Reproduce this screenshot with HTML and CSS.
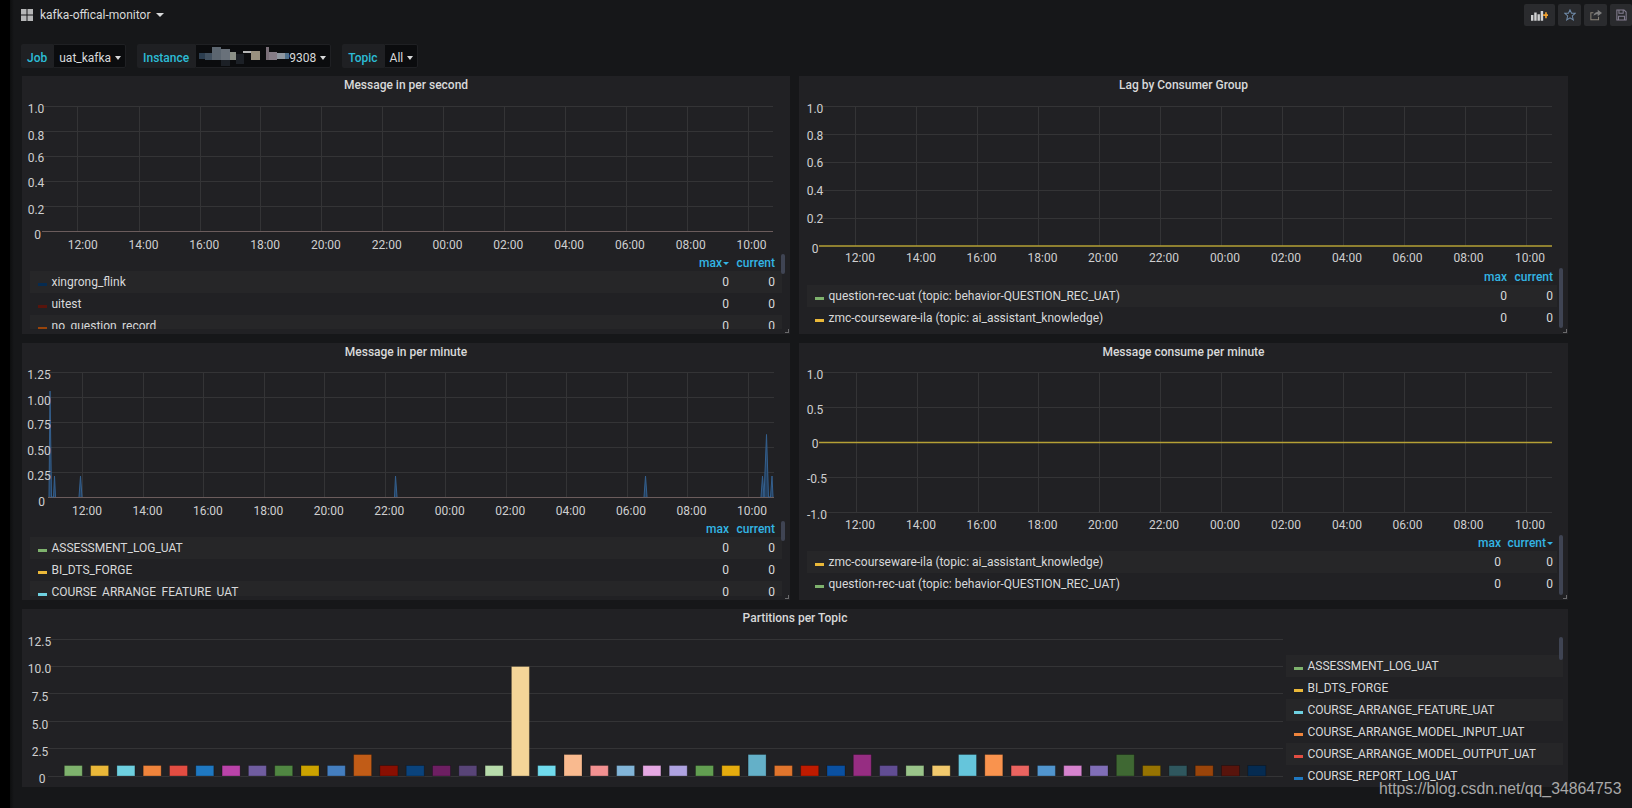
FILE: index.html
```html
<!DOCTYPE html>
<html lang="en">
<head>
<meta charset="utf-8">
<title>kafka-offical-monitor</title>
<link rel="stylesheet" href="styles.css">
</head>
<body>
<div class="rail"></div>
<main class="main">
  <header class="topbar">
    <div class="crumb">
      <svg class="logo" width="12" height="12" viewBox="0 0 12 12"><path d="M0 0h5.500v5.500H0zM6.500 0H12v5.500H6.500zM0 6.500h5.500V12H0zM6.500 6.500H12V12H6.500z"/></svg>
      <span class="crumb-title">kafka-offical-monitor</span>
      <span class="caret caret-title"></span>
    </div>
    <div class="actions">
      <button class="btn btn-wide" aria-label="Add panel">
        <svg width="17" height="12" viewBox="0 0 21 14"><path fill="#d0d1d2" d="M0 7h3v7H0zM4 4h3v10H4zM8 6h3v8H8zM12 2h3v12h-3z"/><path fill="#f2a12e" d="M15 6h2.500V3.500h2V6H21v2.200h-1.500V11h-2V8.200H15z"/></svg>
      </button>
      <button class="btn" aria-label="Star">
        <svg width="12" height="12" viewBox="0 0 14 14"><path class="ico" stroke="#6f8aa8" d="M7 1l1.800 4h4.200L9.700 8l1.100 4.700L7 10.300 3.200 12.700 4.300 8 1 5h4.200z"/></svg>
      </button>
      <button class="btn" aria-label="Share">
        <svg width="12" height="12" viewBox="0 0 14 14"><path class="ico" stroke="#8a8478" d="M10 9v3.500H1v-8h3"/><path fill="#7d7d7d" d="M4 8c.500-3 2.500-4.500 5-4.500V1l5 3.800L9 8.500V6C7 6 5.200 6.500 4 8z"/></svg>
      </button>
      <button class="btn btn-last" aria-label="Save">
        <svg width="11" height="12" viewBox="0 0 13 14"><path class="ico" stroke="#857f92" d="M1 1h8.500L12 3.500V13H1zM3.500 1v4h5V1M3 13V8.500h7V13"/></svg>
      </button>
    </div>
  </header>

  <section class="vars">
    <div class="var">
      <span class="var-label">Job</span>
      <span class="var-value">uat_kafka<span class="caret"></span></span>
    </div>
    <div class="var">
      <span class="var-label">Instance</span>
      <span class="var-value var-value-masked">
        <svg class="mosaic" width="93" height="22" viewBox="0 1 93 22">
          <path fill="#2c3e50" d="M3 9h6v6H3z"/><path fill="#41505f" d="M9 9h7v7H9z"/><path fill="#5c6670" d="M16 3h9v13h-9z"/><path fill="#69717a" d="M25 5h9v11h-9z"/><path fill="#8b8f86" d="M34 8h6v8h-6z"/><path fill="#1c2026" d="M25 16h9v6h-9zM40 10h8v10h-8z"/><path fill="#b5b5b5" d="M47 7h8v2h-8z"/><path fill="#9a917f" d="M55 7h9v9h-9z"/><path fill="#7a6f78" d="M70 3h3v13h-3z"/><path fill="#857c86" d="M73 8h8v8h-8z"/><path fill="#8f97a0" d="M81 9h8v6h-8z"/><path fill="#50708a" d="M89 9h4v6h-4z"/>
        </svg>9308<span class="caret"></span>
      </span>
    </div>
    <div class="var">
      <span class="var-label">Topic</span>
      <span class="var-value">All<span class="caret"></span></span>
    </div>
  </section>

  <section class="board">
    <article class="panel">
      <h2 class="panel-title">Message in per second</h2>
      <svg class="chart chart-a" viewBox="22 93 768 161">
        <path class="grid" d="M43 106.500H773M43 131.500H773M43 156.500H773M43 181.500H773M43 206.500H773M77.500 106V231M139.500 106V231M200.500 106V231M260.500 106V231M321.500 106V231M382.500 106V231M443.500 106V231M504.500 106V231M565.500 106V231M626.500 106V231M687.500 106V231M748.500 106V231"/>
        <path class="series series-flat" d="M42 231.500H773"/>
        <g class="axis">
          <text x="36" y="113">1.0</text><text x="36" y="140">0.8</text><text x="36" y="162">0.6</text><text x="36" y="187">0.4</text><text x="36" y="214">0.2</text><text x="37.500" y="239">0</text>
          <text x="82.700" y="249">12:00</text><text x="143.500" y="249">14:00</text><text x="204.300" y="249">16:00</text><text x="265.100" y="249">18:00</text><text x="325.900" y="249">20:00</text><text x="386.700" y="249">22:00</text><text x="447.500" y="249">00:00</text><text x="508.300" y="249">02:00</text><text x="569.100" y="249">04:00</text><text x="629.900" y="249">06:00</text><text x="690.700" y="249">08:00</text><text x="751.500" y="249">10:00</text>
        </g>
      </svg>
      <div class="legend legend-a">
        <div class="legend-head"><span class="cell">max<span class="caret caret-blue"></span></span><span class="cell">current</span></div>
        <div class="row"><span class="swatch c-navy"></span><span class="name">xingrong_flink</span><span class="cell">0</span><span class="cell">0</span></div>
        <div class="row"><span class="swatch c-maroon"></span><span class="name">uitest</span><span class="cell">0</span><span class="cell">0</span></div>
        <div class="row"><span class="swatch c-brown"></span><span class="name">no_question_record</span><span class="cell">0</span><span class="cell">0</span></div>
      </div>
      <span class="scroll scroll-a"></span>
      <span class="handle"></span>
    </article>

    <article class="panel">
      <h2 class="panel-title">Lag by Consumer Group</h2>
      <svg class="chart chart-b" viewBox="799 93 769 175">
        <path class="grid" d="M819 106.500H1552M819 134.500H1552M819 162.500H1552M819 190.500H1552M819 218.500H1552M855.500 106V246M916.500 106V246M977.500 106V246M1038.500 106V246M1099.500 106V246M1160.500 106V246M1221.500 106V246M1282.500 106V246M1343.500 106V246M1404.500 106V246M1465.500 106V246M1526.500 106V246"/>
        <path class="series series-yellow" d="M819 246H1552"/>
        <g class="axis">
          <text x="815" y="113">1.0</text><text x="815" y="140">0.8</text><text x="815" y="167">0.6</text><text x="815" y="195">0.4</text><text x="815" y="223">0.2</text><text x="815" y="253">0</text>
          <text x="860" y="262">12:00</text><text x="921" y="262">14:00</text><text x="981.500" y="262">16:00</text><text x="1042.500" y="262">18:00</text><text x="1103" y="262">20:00</text><text x="1164" y="262">22:00</text><text x="1225" y="262">00:00</text><text x="1286" y="262">02:00</text><text x="1347" y="262">04:00</text><text x="1407.500" y="262">06:00</text><text x="1468.500" y="262">08:00</text><text x="1530" y="262">10:00</text>
        </g>
      </svg>
      <div class="legend legend-b">
        <div class="legend-head"><span class="cell">max</span><span class="cell">current</span></div>
        <div class="row"><span class="swatch c-green"></span><span class="name">question-rec-uat (topic: behavior-QUESTION_REC_UAT)</span><span class="cell">0</span><span class="cell">0</span></div>
        <div class="row"><span class="swatch c-yellow"></span><span class="name">zmc-courseware-ila (topic: ai_assistant_knowledge)</span><span class="cell">0</span><span class="cell">0</span></div>
      </div>
      <span class="scroll scroll-b"></span>
      <span class="handle"></span>
    </article>

    <article class="panel">
      <h2 class="panel-title">Message in per minute</h2>
      <svg class="chart chart-c" viewBox="22 360 768 160">
        <path class="grid" d="M48 372.500H774M48 397.500H774M48 422.500H774M48 447.500H774M48 472.500H774M82.500 372V497M143.500 372V497M203.500 372V497M264.500 372V497M324.500 372V497M385.500 372V497M445.500 372V497M506.500 372V497M566.500 372V497M627.500 372V497M687.500 372V497M748.500 372V497"/>
        <path class="series series-flat" d="M48 497.500H774"/>
        <path class="spikes" d="M49 497L50 391L51.500 497L53.500 497L54.500 476L55.500 497M79 497L80.500 476L82 497M394.500 497L395.500 476L397 497M644 497L645.500 476L647 497M761 497L762.500 476L764 497L766.500 434.500L768.500 497L770.500 497L772 476L773 497"/>
        <g class="axis">
          <text x="39" y="378.500">1.25</text><text x="39" y="405">1.00</text><text x="39" y="429">0.75</text><text x="39" y="455">0.50</text><text x="39" y="480">0.25</text><text x="41.700" y="506">0</text>
          <text x="87" y="515">12:00</text><text x="147.500" y="515">14:00</text><text x="207.900" y="515">16:00</text><text x="268.400" y="515">18:00</text><text x="328.800" y="515">20:00</text><text x="389.300" y="515">22:00</text><text x="449.700" y="515">00:00</text><text x="510.200" y="515">02:00</text><text x="570.600" y="515">04:00</text><text x="631" y="515">06:00</text><text x="691.500" y="515">08:00</text><text x="752" y="515">10:00</text>
        </g>
      </svg>
      <div class="legend legend-c">
        <div class="legend-head"><span class="cell">max</span><span class="cell">current</span></div>
        <div class="row"><span class="swatch c-green"></span><span class="name">ASSESSMENT_LOG_UAT</span><span class="cell">0</span><span class="cell">0</span></div>
        <div class="row"><span class="swatch c-yellow"></span><span class="name">BI_DTS_FORGE</span><span class="cell">0</span><span class="cell">0</span></div>
        <div class="row"><span class="swatch c-cyan"></span><span class="name">COURSE_ARRANGE_FEATURE_UAT</span><span class="cell">0</span><span class="cell">0</span></div>
      </div>
      <span class="scroll scroll-c"></span>
      <span class="handle"></span>
    </article>

    <article class="panel">
      <h2 class="panel-title">Message consume per minute</h2>
      <svg class="chart chart-d" viewBox="799 360 769 174">
        <path class="grid" d="M819 372.500H1552M819 407.500H1552M819 477.500H1552M819 512.500H1552M856.500 372V512M917.500 372V512M978.500 372V512M1038.500 372V512M1099.500 372V512M1160.500 372V512M1221.500 372V512M1282.500 372V512M1343.500 372V512M1404.500 372V512M1465.500 372V512M1526.500 372V512"/>
        <path class="series series-yellow" d="M819 442.500H1552"/>
        <g class="axis">
          <text x="815" y="378.500">1.0</text><text x="815" y="414">0.5</text><text x="815" y="448">0</text><text x="817" y="483">-0.5</text><text x="817" y="519">-1.0</text>
          <text x="860" y="528.500">12:00</text><text x="921" y="528.500">14:00</text><text x="981.500" y="528.500">16:00</text><text x="1042.500" y="528.500">18:00</text><text x="1103" y="528.500">20:00</text><text x="1164" y="528.500">22:00</text><text x="1225" y="528.500">00:00</text><text x="1286" y="528.500">02:00</text><text x="1347" y="528.500">04:00</text><text x="1407.500" y="528.500">06:00</text><text x="1468.500" y="528.500">08:00</text><text x="1530" y="528.500">10:00</text>
        </g>
      </svg>
      <div class="legend legend-d">
        <div class="legend-head"><span class="cell">max</span><span class="cell">current<span class="caret caret-blue"></span></span></div>
        <div class="row"><span class="swatch c-yellow"></span><span class="name">zmc-courseware-ila (topic: ai_assistant_knowledge)</span><span class="cell">0</span><span class="cell">0</span></div>
        <div class="row"><span class="swatch c-green"></span><span class="name">question-rec-uat (topic: behavior-QUESTION_REC_UAT)</span><span class="cell">0</span><span class="cell">0</span></div>
      </div>
      <span class="scroll scroll-d"></span>
      <span class="handle"></span>
    </article>

    <article class="panel panel-wide">
      <h2 class="panel-title">Partitions per Topic</h2>
      <div class="wide-body">
        <svg class="chart chart-e" viewBox="22 626 1264 161">
          <path class="grid" d="M48 639.500H1283M48 666.500H1283M48 693.500H1283M48 721.500H1283M48 748.500H1283M48 776.500H1283"/>
          <g class="bars">
            <rect x="64.300" y="765.500" width="18" height="10.500" fill="#7EB26D"/><rect x="90.600" y="765.500" width="18" height="10.500" fill="#EAB839"/><rect x="116.900" y="765.500" width="18" height="10.500" fill="#6ED0E0"/><rect x="143.200" y="765.500" width="18" height="10.500" fill="#EF843C"/><rect x="169.500" y="765.500" width="18" height="10.500" fill="#E24D42"/><rect x="195.800" y="765.500" width="18" height="10.500" fill="#1F78C1"/><rect x="222.100" y="765.500" width="18" height="10.500" fill="#BA43A9"/><rect x="248.400" y="765.500" width="18" height="10.500" fill="#705DA0"/><rect x="274.700" y="765.500" width="18" height="10.500" fill="#508642"/><rect x="301" y="765.500" width="18" height="10.500" fill="#CCA300"/><rect x="327.300" y="765.500" width="18" height="10.500" fill="#447EBF"/><rect x="353.600" y="754.500" width="18" height="21.500" fill="#C15C17"/><rect x="379.900" y="765.500" width="18" height="10.500" fill="#890F02"/><rect x="406.200" y="765.500" width="18" height="10.500" fill="#0A437C"/><rect x="432.500" y="765.500" width="18" height="10.500" fill="#6D1F62"/><rect x="458.800" y="765.500" width="18" height="10.500" fill="#584477"/><rect x="485.100" y="765.500" width="18" height="10.500" fill="#B7DBAB"/><rect x="511.400" y="666.500" width="18" height="109.500" fill="#F4D598"/><rect x="537.700" y="765.500" width="18" height="10.500" fill="#70DBED"/><rect x="564" y="754.500" width="18" height="21.500" fill="#F9BA8F"/><rect x="590.300" y="765.500" width="18" height="10.500" fill="#F29191"/><rect x="616.600" y="765.500" width="18" height="10.500" fill="#82B5D8"/><rect x="642.900" y="765.500" width="18" height="10.500" fill="#E5A8E2"/><rect x="669.200" y="765.500" width="18" height="10.500" fill="#AEA2E0"/><rect x="695.500" y="765.500" width="18" height="10.500" fill="#629E51"/><rect x="721.800" y="765.500" width="18" height="10.500" fill="#E5AC0E"/><rect x="748.100" y="754.500" width="18" height="21.500" fill="#64B0C8"/><rect x="774.400" y="765.500" width="18" height="10.500" fill="#E0752D"/><rect x="800.700" y="765.500" width="18" height="10.500" fill="#BF1B00"/><rect x="827" y="765.500" width="18" height="10.500" fill="#0A50A1"/><rect x="853.300" y="754.500" width="18" height="21.500" fill="#962D82"/><rect x="879.600" y="765.500" width="18" height="10.500" fill="#614D93"/><rect x="905.900" y="765.500" width="18" height="10.500" fill="#9AC48A"/><rect x="932.200" y="765.500" width="18" height="10.500" fill="#F2C96D"/><rect x="958.500" y="754.500" width="18" height="21.500" fill="#65C5DB"/><rect x="984.800" y="754.500" width="18" height="21.500" fill="#F9934E"/><rect x="1011.100" y="765.500" width="18" height="10.500" fill="#EA6460"/><rect x="1037.400" y="765.500" width="18" height="10.500" fill="#5195CE"/><rect x="1063.700" y="765.500" width="18" height="10.500" fill="#D683CE"/><rect x="1090" y="765.500" width="18" height="10.500" fill="#806EB7"/><rect x="1116.300" y="754.500" width="18" height="21.500" fill="#3F6833"/><rect x="1142.600" y="765.500" width="18" height="10.500" fill="#967302"/><rect x="1168.900" y="765.500" width="18" height="10.500" fill="#2F575E"/><rect x="1195.200" y="765.500" width="18" height="10.500" fill="#99440A"/><rect x="1221.500" y="765.500" width="18" height="10.500" fill="#58140C"/><rect x="1247.800" y="765.500" width="18" height="10.500" fill="#052B51"/>
          </g>
          <g class="axis">
            <text x="39.500" y="646">12.5</text><text x="39.500" y="673">10.0</text><text x="40" y="701">7.5</text><text x="40" y="729">5.0</text><text x="40" y="756">2.5</text><text x="42" y="783">0</text>
          </g>
        </svg>
        <div class="legend legend-e">
          <div class="row"><span class="swatch c-green"></span><span class="name">ASSESSMENT_LOG_UAT</span></div>
          <div class="row"><span class="swatch c-yellow"></span><span class="name">BI_DTS_FORGE</span></div>
          <div class="row"><span class="swatch c-cyan"></span><span class="name">COURSE_ARRANGE_FEATURE_UAT</span></div>
          <div class="row"><span class="swatch c-orange"></span><span class="name">COURSE_ARRANGE_MODEL_INPUT_UAT</span></div>
          <div class="row"><span class="swatch c-red"></span><span class="name">COURSE_ARRANGE_MODEL_OUTPUT_UAT</span></div>
          <div class="row"><span class="swatch c-blue"></span><span class="name">COURSE_REPORT_LOG_UAT</span></div>
        </div>
      </div>
      <span class="scroll scroll-e"></span>
    </article>
  </section>
</main>
<div class="watermark">https://blog.csdn.net/qq_34864753</div>
</body>
</html>
```

FILE: styles.css
```css
* { box-sizing: border-box; }

html, body { height: 100%; }

body {
  margin: 0;
  display: flex;
  height: 808px;
  overflow: hidden;
  background: #161719;
  color: #d8d9da;
  font-family: Roboto, "Liberation Sans", sans-serif;
  font-size: 12px;
}

.rail {
  flex: 0 0 14px;
  margin-right: -4px;
  background: linear-gradient(90deg, #000 0, #000 10px, #0e0f10 10.5px, #161719 14px);
}

.main { flex: 1; min-width: 0; }

/* top bar */
.topbar {
  display: flex;
  justify-content: space-between;
  height: 44px;
  padding: 4px 0 0 11px;
}

.crumb { display: flex; align-items: center; height: 22px; }
.logo { fill: #b5b6b7; margin-right: 7px; }
.crumb-title { font-size: 12px; color: #d8d9da; }

.caret {
  display: inline-block;
  flex: none;
  width: 0;
  height: 0;
  margin-left: 4px;
  border-left: 3.5px solid transparent;
  border-right: 3.5px solid transparent;
  border-top: 4px solid #d8d9da;
  vertical-align: middle;
}

.caret-title {
  margin-left: 6px;
  border-left-width: 4px;
  border-right-width: 4px;
}

.caret-blue {
  margin-left: 1px;
  border-left-width: 3px;
  border-right-width: 3px;
  border-top: 3px solid #33b5e5;
}

.actions { display: flex; gap: 3px; }

.btn {
  display: flex;
  align-items: center;
  justify-content: center;
  width: 23px;
  height: 22px;
  padding: 0;
  border: 0;
  border-radius: 2px;
  background: #2a2b2e;
}

.btn-wide { width: 31px; }
.btn-last { width: 22px; }

.ico { fill: none; stroke-width: 1.2; }

/* template variables */
.vars {
  display: flex;
  gap: 11px;
  height: 24px;
  margin: 0 0 8px 11px;
}

.var { display: flex; }

.var-label {
  display: flex;
  align-items: center;
  padding: 4px 6px 0;
  background: #1f2023;
  color: #2cbcd6;
  font-size: 12px;
  font-weight: 500;
  border-radius: 2px 0 0 2px;
}

.var-value {
  display: flex;
  align-items: center;
  padding: 4px 4px 0 5px;
  background: #0b0c0e;
  border: 1px solid #1f2023;
  color: #d8d9da;
  font-size: 12px;
  border-radius: 0 2px 2px 0;
}

.var-value-masked { padding-left: 0; }
.mosaic { display: block; margin-top: -4px; }

/* dashboard grid */
.board {
  display: grid;
  grid-template-columns: 768px 769px;
  grid-template-rows: 258px 257px 178px;
  column-gap: 9px;
  row-gap: 9px;
  width: 1546px;
  margin-left: 12px;
}

.panel {
  position: relative;
  display: flex;
  flex-direction: column;
  overflow: hidden;
  background: #212124;
}

.panel-wide { grid-column: 1 / 3; }

.panel-title {
  flex: none;
  height: 17px;
  margin: 0;
  font-size: 12px;
  font-weight: 500;
  line-height: 18px;
  text-align: center;
  color: #d8d9da;
}

.chart { display: block; flex: none; }
.chart-a { width: 768px; height: 161px; }
.chart-b { width: 769px; height: 175px; }
.chart-c { width: 768px; height: 160px; }
.chart-d { width: 769px; height: 174px; }
.chart-e { width: 1264px; height: 161px; }

.grid { fill: none; stroke: #343436; stroke-width: 1; }
.series { fill: none; stroke-width: 1; }
.series-flat { stroke: #6b5c5c; }
.series-yellow { stroke: #b5a035; stroke-width: 1.5; }
.spikes { fill: #24405f; stroke: #34608f; stroke-width: 1; }

.axis text {
  fill: #cfcfd0;
  font-family: Roboto, "Liberation Sans", sans-serif;
  font-size: 12px;
  text-anchor: middle;
}

.bars rect { stroke: rgba(0, 0, 0, 0.24); stroke-width: 1; }

/* legends */
.legend { overflow: hidden; margin-left: 8px; flex: none; }
.legend-a, .legend-c { width: 752px; --pad: 7px; --col: 46px; }
.legend-b { width: 750px; --pad: 4px; --col: 46px; }
.legend-d { width: 750px; --pad: 4px; --col: 52px; }
.legend-a { height: 75px; }
.legend-b { height: 61px; }
.legend-c { height: 76px; }
.legend-d { height: 61px; }

.legend-head {
  display: flex;
  justify-content: flex-end;
  align-items: center;
  height: 17px;
  padding-right: var(--pad);
  color: #33b5e5;
  font-weight: 500;
}

.row {
  display: flex;
  align-items: center;
  height: 22px;
  padding: 0 var(--pad) 0 8px;
}

.row:nth-child(even) { background: #262628; }

.name { flex: 1; min-width: 0; white-space: nowrap; }

.cell {
  flex: none;
  width: var(--col);
  text-align: right;
  white-space: nowrap;
}

.swatch {
  flex: none;
  width: 9px;
  height: 3px;
  margin: 4px 4.500px 0 0;
}

.c-green { background: #7eb26d; }
.c-yellow { background: #eab839; }
.c-cyan { background: #6ed0e0; }
.c-orange { background: #ef843c; }
.c-red { background: #e24d42; }
.c-blue { background: #1f78c1; }
.c-navy { background: #052b51; }
.c-maroon { background: #58140c; }
.c-brown { background: #99440a; }

.wide-body { display: flex; flex: 1; min-height: 0; }

.legend-e {
  flex: none;
  width: 277px;
  margin-left: 0;
  padding-top: 29px;
  --pad: 4px;
  --col: 46px;
}

.legend-e .row:nth-child(odd) { background: #262628; }
.legend-e .row:nth-child(even) { background: none; }

/* overlays */
.scroll {
  position: absolute;
  width: 4px;
  border-radius: 2px;
  background: #3f4453;
}

.scroll-a { left: 759px; top: 178px; height: 20px; }
.scroll-b { left: 760px; top: 192px; height: 60px; }
.scroll-c { left: 759px; top: 178px; height: 20px; }
.scroll-d { left: 760px; top: 192px; height: 60px; }
.scroll-e { left: 1537px; top: 28px; height: 23px; }

.handle {
  position: absolute;
  right: 1px;
  bottom: 1px;
  width: 4px;
  height: 4px;
  border-right: 1px solid #6a6a6c;
  border-bottom: 1px solid #6a6a6c;
}

.watermark {
  position: absolute;
  left: 1379px;
  top: 780px;
  font-family: "Liberation Sans", Arial, sans-serif;
  font-size: 15.800px;
  line-height: 18px;
  color: #a8a8a8;
}
```
